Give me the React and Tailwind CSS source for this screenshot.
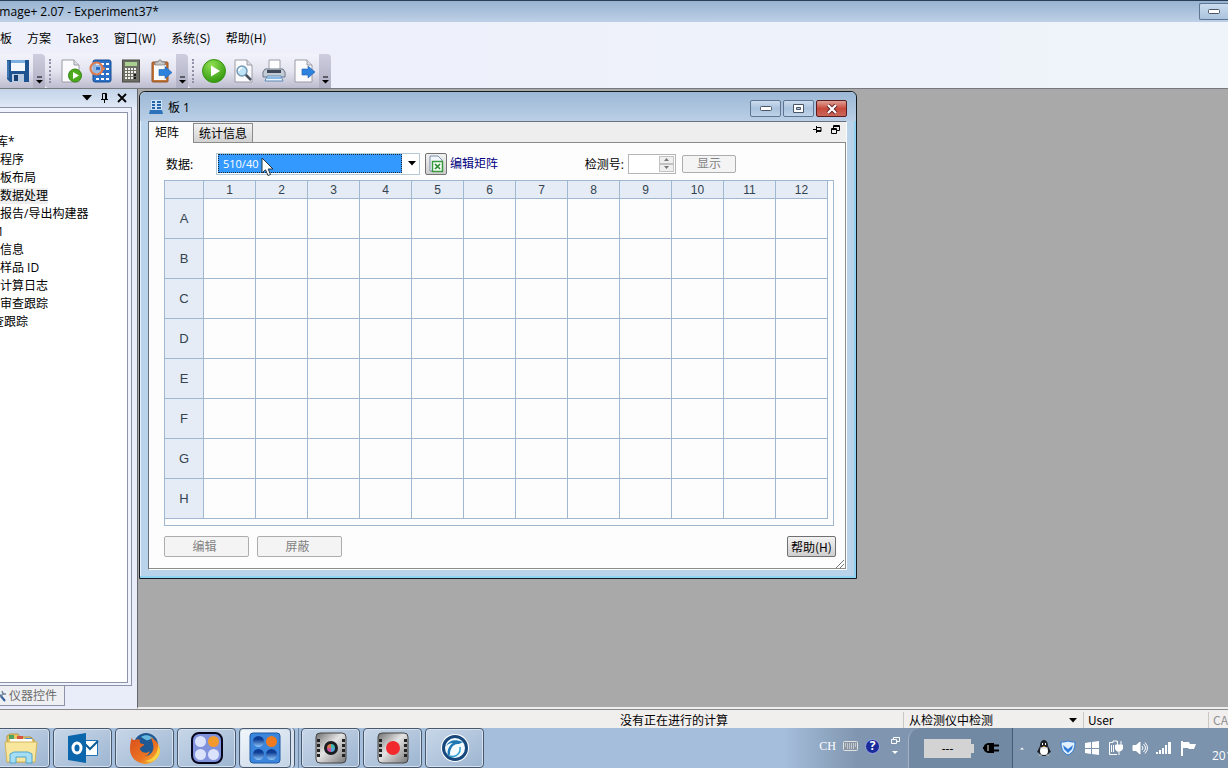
import { useState } from "react";

const COLUMNS = [1, 2, 3, 4, 5, 6, 7, 8, 9, 10, 11, 12];
const ROWS = ["A", "B", "C", "D", "E", "F", "G", "H"];

const MENU = ["方案", "Take3", "窗口(W)", "系统(S)", "帮助(H)"];

const TREE = [
  { label: "库*", indent: "-ml-1" },
  { label: "程序" },
  { label: "板布局" },
  { label: "数据处理", selected: true },
  { label: "报告/导出构建器" },
  { label: "1", indent: "-ml-[3px]" },
  { label: "信息" },
  { label: "样品 ID" },
  { label: "计算日志" },
  { label: "审查跟踪" },
  { label: "查跟踪", indent: "-ml-2" },
];

/* Toolbar icons */

function SaveIcon() {
  return (
    <svg width="24" height="24" viewBox="0 0 24 24">
      <path d="M1 1h22v22H4l-3-3z" fill="#1e5490" />
      <path d="M5 1h14v11H5z" fill="#f4f8fc" />
      <path d="M5 1h14v3H5z" fill="#7db0e0" />
      <path d="M6 15h12v8H6z" fill="#b9cbe0" />
      <path d="M8 16h4v6H8z" fill="#173f70" />
      <path d="M2 2v17" stroke="#5e96cf" />
    </svg>
  );
}

function PageIcon({ children }) {
  return (
    <svg width="24" height="24" viewBox="0 0 24 24">
      <path d="M3 1h12l5 5v17H3z" fill="#fbfbfd" stroke="#9b9ba5" />
      <path d="M15 1v5h5" fill="#dcdce4" stroke="#9b9ba5" />
      {children}
    </svg>
  );
}

function RunPageIcon() {
  return (
    <PageIcon>
      <circle cx="16" cy="16.500" r="6.500" fill="#4bab1c" stroke="#31830d" />
      <path d="M14 13l6 3.500-6 3.500z" fill="#fff" />
    </PageIcon>
  );
}

function PreviewIcon() {
  return (
    <PageIcon>
      <path d="M13 15l6 6" stroke="#46505f" strokeWidth="2.500" />
      <circle cx="10" cy="12" r="5" fill="#bfe3f8" stroke="#7799b5" strokeWidth="1.500" />
      <path d="M7 12a3 3 0 013-3" stroke="#fff" strokeWidth="1.500" fill="none" />
    </PageIcon>
  );
}

function ExportIcon() {
  return (
    <PageIcon>
      <path d="M10 10h6V7l7 6-7 6v-3h-6z" fill="#2f82dc" stroke="#1c5fae" strokeWidth=".6" />
    </PageIcon>
  );
}

function PlateReadIcon() {
  return (
    <svg width="24" height="24" viewBox="0 0 24 24">
      <rect x="4" y="1" width="18" height="22" rx="2" fill="#2a70c6" stroke="#174f94" />
      {[4, 9, 14, 19].map((y) =>
        [7, 12, 17].map((x) => (
          <rect key={`${x}-${y}`} x={x} y={y} width="3" height="2" fill="#fff" />
        ))
      )}
      <circle cx="7.500" cy="9.500" r="6" fill="#cfdcf0aa" stroke="#dd7b4c" strokeWidth="2.200" />
      <rect x="7" y="8" width="4" height="3" fill="#2a70c6" />
      <path d="M12 9.500h4" stroke="#dd7b4c" strokeWidth="2" />
    </svg>
  );
}

function CalculatorIcon() {
  return (
    <svg width="24" height="24" viewBox="0 0 24 24">
      <rect x="3.500" y="1" width="17" height="22" fill="#6c6d64" stroke="#4b4c45" />
      <rect x="6" y="3" width="12" height="4" fill="#a8d18f" />
      {[9, 12, 15, 18].map((y) =>
        [6, 9, 12, 15].map((x) => (
          <rect
            key={`${x}-${y}`}
            x={x}
            y={y}
            width="2"
            height="2"
            fill={x === 15 && y > 14 ? "#1b1b1b" : "#f1f1ec"}
          />
        ))
      )}
    </svg>
  );
}

function ClipboardIcon() {
  return (
    <svg width="24" height="24" viewBox="0 0 24 24">
      <rect x="3" y="3" width="16" height="20" rx="1" fill="#c2763a" stroke="#925022" />
      <path d="M5 6h12v15H5z" fill="#fafafa" />
      <path d="M6 6V3h3l1-2h2l1 2h3v3z" fill="#c7c7c7" stroke="#777" strokeWidth=".7" />
      <path d="M10 10.500h6v-3l7 6-7 6v-3h-6z" fill="#2f82dc" stroke="#1c5fae" strokeWidth=".6" />
    </svg>
  );
}

function PlayIcon() {
  return (
    <svg width="26" height="26" viewBox="0 0 26 26">
      <defs>
        <radialGradient id="play" cx=".4" cy=".25" r=".8">
          <stop offset="0" stopColor="#8fe052" />
          <stop offset="1" stopColor="#2e950b" />
        </radialGradient>
      </defs>
      <circle cx="13" cy="13" r="11.500" fill="url(#play)" stroke="#3b9416" />
      <path d="M10 7.500l9 5.500-9 5.500z" fill="#fff" />
    </svg>
  );
}

function PrinterIcon() {
  return (
    <svg width="24" height="24" viewBox="0 0 24 24">
      <path d="M7 1h11v10H7z" fill="#fdfdfd" stroke="#9aa0aa" />
      <path d="M3 10h18l2 3v5H1v-5z" fill="#c3cbd7" stroke="#6c7687" />
      <path d="M5 11h14v3H5z" fill="#3f4857" />
      <path d="M5 17h14l2 5H3z" fill="#e9f3fc" stroke="#5d88b4" />
      <path d="M5 19h14" stroke="#2f7fca" />
    </svg>
  );
}

function ToolButton({ label, children }) {
  return (
    <button aria-label={label} className="flex h-7 w-[30px] items-center justify-center">
      {children}
    </button>
  );
}

function Overflow() {
  return (
    <button
      aria-label="更多"
      className="flex h-[34px] w-3 items-end justify-center rounded-tr bg-linear-to-b from-[#cdcddf] to-[#b0b0c4] pb-1"
    >
      <svg width="7" height="8" viewBox="0 0 7 8">
        <path d="M1 1h5" stroke="#000" />
        <path d="M0 4h7L3.500 7.500z" fill="#000" />
      </svg>
    </button>
  );
}

function ToolGroup({ children }) {
  return (
    <div className="flex h-[34px] items-center rounded-l bg-linear-to-b from-[#f2f3fb] via-[#e4e4f0] to-[#bcbccf] pl-1">
      <div className="mr-[5px] h-6 w-[2px] border-l-2 border-dotted border-[#8f8fa5]" />
      {children}
      <Overflow />
    </div>
  );
}

/* Side panel */

function SidePanel() {
  return (
    <aside className="flex w-[137px] shrink-0 flex-col bg-[#e9edf9]">
      <div className="flex h-[18px] items-center justify-end gap-2 bg-linear-to-b from-[#c3d3e8] to-[#dfe8f5] pr-[10px]">
        <button aria-label="菜单">
          <svg width="10" height="6" viewBox="0 0 10 6">
            <path d="M0 0h10L5 5.500z" fill="#000" />
          </svg>
        </button>
        <button aria-label="固定">
          <svg width="9" height="10" viewBox="0 0 9 10" fill="none" stroke="#000">
            <path d="M2.500 6V.5h4V6M5.500 1v5M1 6.500h7M4.500 7v3" />
          </svg>
        </button>
        <button aria-label="关闭">
          <svg width="10" height="10" viewBox="0 0 10 10" stroke="#000" strokeWidth="1.800">
            <path d="M1 1l8 8M9 1l-8 8" />
          </svg>
        </button>
      </div>
      <div className="mr-[5px] flex flex-1 border-y border-r border-[#8c93a8] bg-[#f0f3fb] pt-1 pr-[3px] pb-[2px]">
        <ul className="flex-1 overflow-hidden border-y border-r border-[#8c93a8] bg-white pt-5">
          {TREE.map((item) => (
            <li key={item.label} className={`flex h-[18px] items-center ${item.indent || ""}`}>
              <span className={item.selected ? "bg-[#efefef]" : ""}>{item.label}</span>
            </li>
          ))}
        </ul>
      </div>
      <div className="h-[23px]">
        <button className="flex h-5 w-[65px] items-center gap-[3px] border-r border-b border-[#8c93a8] bg-[#eeeff2] text-[#6d6d6d]">
          <svg width="6" height="14" viewBox="0 0 6 14" fill="none">
            <path d="M0 6l5 6" stroke="#2f5d9a" strokeWidth="2" />
            <path d="M0 8l4-4M2 2l1 3 3 0" stroke="#73859d" strokeWidth="1.500" />
          </svg>
          仪器控件
        </button>
      </div>
    </aside>
  );
}

/* Plate window */

function WindowButton({ label, close, children }) {
  return (
    <button
      aria-label={label}
      className={`flex h-[17px] w-[31px] items-center justify-center rounded-xs border ${
        close
          ? "border-[#5b1c20] bg-linear-to-b from-[#dda097] via-[#c8493b] to-[#c8675a]"
          : "border-[#5d7592] bg-linear-to-b from-[#cbdcee] via-[#a9c2dd] to-[#bfd3e8]"
      }`}
    >
      {children}
    </button>
  );
}

function MinimizeGlyph() {
  return (
    <svg width="12" height="6" viewBox="0 0 12 6">
      <rect x=".5" y=".5" width="11" height="4" rx="1" fill="#fff" stroke="#4a5565" />
    </svg>
  );
}

function PlateTable() {
  return (
    <div className="border border-[#9fb8cf] pr-[5px] pb-[6px]">
      <table className="-mt-px -ml-px w-[664px] table-fixed border-collapse font-['Liberation_Sans',sans-serif] text-[#33434f]">
        <thead>
          <tr className="h-[18px] bg-[#e5ecf6]">
            <th className="w-[39px] border border-[#9fb8cf]" />
            {COLUMNS.map((n) => (
              <th key={n} className="w-[52px] border border-[#9fb8cf] p-0 text-xs leading-4 font-normal">
                {n}
              </th>
            ))}
          </tr>
        </thead>
        <tbody>
          {ROWS.map((row) => (
            <tr key={row} className="h-10">
              <th className="border border-[#9fb8cf] bg-[#e5ecf6] p-0 text-[13px] leading-4 font-normal">
                {row}
              </th>
              {COLUMNS.map((n) => (
                <td key={n} className="border border-[#9fb8cf]" />
              ))}
            </tr>
          ))}
        </tbody>
      </table>
    </div>
  );
}

function PlateWindow() {
  const [data, setData] = useState("510/40");
  const [readNo, setReadNo] = useState("");

  return (
    <section className="absolute top-[2px] left-px w-[718px] rounded-t-md border border-[#14191f] bg-[#b9d3ea] shadow-[inset_-2px_-2px_0_#8fd3f2,inset_1px_1px_0_#e8f1fa]">
      <div className="flex h-[29px] items-center rounded-t-md bg-linear-to-b from-[#9cb8d6] to-[#bacfe6] pt-px pr-[9px] pl-[9px]">
        <svg width="14" height="14" viewBox="0 0 14 14">
          <path d="M2 0h11v11H2z" fill="#cfe3f6" />
          <path d="M1 10h12l1 4H0z" fill="#2b72ba" />
          <path d="M3 1h3v2H3zM8 1h4v2H8zM3 4h3v2H3zM8 4h4v2H8zM3 7h3v2H3zM8 7h4v2H8z" fill="#2665a8" />
        </svg>
        <h2 className="mt-[2px] ml-[5px] flex-1">板 1</h2>
        <div className="mt-[3px] flex gap-[2px]">
          <WindowButton label="最小化">
            <MinimizeGlyph />
          </WindowButton>
          <WindowButton label="最大化">
            <svg width="11" height="9" viewBox="0 0 11 9">
              <path d="M.5.500h10v8H.5z" fill="#fff" stroke="#4a5565" />
              <path d="M3.500 3.500h4v2h-4z" fill="#a9c2dd" stroke="#4a5565" />
            </svg>
          </WindowButton>
          <WindowButton label="关闭" close>
            <svg width="12" height="10" viewBox="0 0 12 10">
              <path d="M2 1l8 8M10 1l-8 8" stroke="#5c2225" strokeWidth="4" />
              <path d="M2 1l8 8M10 1l-8 8" stroke="#fff" strokeWidth="2.200" />
            </svg>
          </WindowButton>
        </div>
      </div>

      <div className="mr-[9px] mb-2 ml-2 border border-t-[#68727e] border-r-white border-b-white border-l-[#68727e] bg-[#eee]">
        {/* Tabs */}
        <div className="flex h-[21px] items-end">
          <button className="h-[21px] w-11 bg-[#fdfdfd] pr-2">矩阵</button>
          <div className="flex h-[21px] flex-1 items-end justify-between border-b border-[#8b8b8b]">
            <button className="h-[19px] w-[60px] border border-b-0 border-[#8b8b8b] bg-linear-to-b from-[#f2f2f2] to-[#d2d2d2] pt-px leading-[18px]">
              统计信息
            </button>
            <div className="flex h-[17px] items-start gap-[9px] pr-[6px]">
              <button aria-label="固定">
                <svg width="9" height="9" viewBox="0 0 9 9" fill="none" stroke="#000">
                  <path d="M0 4.500h3M3.500 1v7M4 2.500h4v4H4M4 5.500h4" />
                </svg>
              </button>
              <button aria-label="还原">
                <svg width="9" height="9" viewBox="0 0 9 9" fill="none" stroke="#000">
                  <path d="M2.500 3V.5h6v5H6M2 1.500h7M.5 3.500h5v5h-5zM0 4.500h6" />
                </svg>
              </button>
            </div>
          </div>
        </div>

        <div className="border-r border-b border-[#8b8b8b] bg-[#fdfdfd] pt-[10px] pr-[11px] pl-[15px]">
          {/* Data set and read number */}
          <div className="flex h-[21px] items-center">
            <label htmlFor="data" className="w-[52px] pt-[2px] pl-[2px]">
              数据:
            </label>
            <div className="relative flex h-[22px] w-[204px] items-center border border-[#b4c8d8] bg-white p-px">
              <select
                id="data"
                value={data}
                onChange={(e) => setData(e.target.value)}
                className="h-[19px] w-[184px] appearance-none border border-dotted border-[#1c2c3c] bg-[#3399ff] pl-1 text-[11px] leading-4 text-white"
              >
                <option>510/40</option>
              </select>
              <svg width="8" height="5" viewBox="0 0 8 5" className="ml-[6px]">
                <path d="M0 0h8L4 4.500z" fill="#000" />
              </svg>
              <svg width="13" height="20" viewBox="0 0 13 20" className="absolute top-[3px] left-11">
                <path
                  d="M1 1v15l3.500-3.200L7 18.500l2.500-1L7.200 12H12z"
                  fill="#fff"
                  stroke="#26323e"
                />
              </svg>
            </div>
            <button
              id="edit-matrix"
              className="ml-[5px] flex h-[22px] w-[22px] items-center justify-center rounded-xs border border-[#727272] bg-linear-to-b from-[#f2f2f2] to-[#cfcfcf]"
              aria-label="编辑矩阵"
            >
              <svg width="18" height="18" viewBox="0 0 18 18">
                <path d="M3 1h8l4 4v11H3z" fill="#f3f8ff" stroke="#7b8fa8" />
                <path d="M5.500 6.500h10v10h-10z" fill="#f4fff4" stroke="#3a9a3d" strokeWidth="1.500" />
                <path d="M8 9l5 5M13 9l-5 5" stroke="#2f8c33" strokeWidth="1.700" />
              </svg>
            </button>
            <label htmlFor="edit-matrix" className="ml-[3px] text-[#000080]">
              编辑矩阵
            </label>
            <div className="flex flex-1 items-center justify-end pr-[98px]">
              <label htmlFor="read-no" className="pt-[2px]">
                检测号:
              </label>
              <div className="mr-[6px] ml-1 flex h-5 w-12 border border-[#b5b5b5] bg-white p-px">
                <input
                  id="read-no"
                  value={readNo}
                  onChange={(e) => setReadNo(e.target.value)}
                  className="w-0 flex-1 outline-none"
                />
                <div className="flex w-[15px] flex-col">
                  <button
                    aria-label="增加"
                    className="flex flex-1 items-center justify-center border border-[#c2c2c2] bg-[#efefef]"
                  >
                    <svg width="5" height="3" viewBox="0 0 5 3">
                      <path d="M0 3h5L2.500 0z" fill="#777" />
                    </svg>
                  </button>
                  <button
                    aria-label="减少"
                    className="flex flex-1 items-center justify-center border border-[#c2c2c2] bg-[#efefef]"
                  >
                    <svg width="5" height="3" viewBox="0 0 5 3">
                      <path d="M0 0h5L2.500 3z" fill="#777" />
                    </svg>
                  </button>
                </div>
              </div>
              <button
                disabled
                className="h-[18px] w-[54px] rounded-xs border border-[#adadad] bg-[#f4f4f4] leading-4 text-[#838383]"
              >
                显示
              </button>
            </div>
          </div>

          <div className="mt-[6px]">
            <PlateTable />
          </div>

          {/* Actions */}
          <div className="mt-[10px] flex h-8 items-start">
            <button
              disabled
              className="mr-2 h-[21px] w-[85px] rounded-xs border border-[#adadad] bg-[#f4f4f4] pr-1 text-[#838383]"
            >
              编辑
            </button>
            <button
              disabled
              className="h-[21px] w-[85px] rounded-xs border border-[#adadad] bg-[#f4f4f4] pr-1 text-[#838383]"
            >
              屏蔽
            </button>
            <button className="ml-auto h-[21px] w-[49px] rounded-xs border border-[#707070] bg-linear-to-b from-[#f2f2f2] to-[#cfcfcf] font-['Noto_Sans_CJK_SC',sans-serif] leading-4 whitespace-nowrap">
              帮助(H)
            </button>
            <svg width="9" height="9" viewBox="0 0 9 9" className="-mr-[11px] self-end" stroke="#777">
              <path d="M0 9l8-8M4 9l4-4" />
            </svg>
          </div>
        </div>
      </div>
    </section>
  );
}

/* Status bar */

function StatusBar() {
  return (
    <footer className="flex h-[19px] items-center border-t border-[#8b8b8b] bg-[#f1eeee] pt-[2px] font-['Noto_Sans_CJK_SC',sans-serif] leading-4">
      <div className="flex-1 pl-[620px]">没有正在进行的计算</div>
      <div className="flex h-4 w-[180px] items-center border-l border-[#c9c6c6] pr-[6px] pl-[5px]">
        <select aria-label="检测仪" className="flex-1 appearance-none outline-none">
          <option>从检测仪中检测</option>
        </select>
        <svg width="8" height="5" viewBox="0 0 8 5">
          <path d="M0 0h8L4 4.500z" fill="#000" />
        </svg>
      </div>
      <div className="h-4 w-[125px] border-l border-[#c9c6c6] pl-1">User</div>
      <div className="h-4 w-5 overflow-hidden border-l border-[#c9c6c6] pl-1 text-[#909090]">CAP</div>
    </footer>
  );
}

/* Taskbar icons */

function FolderIcon() {
  return (
    <svg width="34" height="32" viewBox="0 0 34 32">
      <path d="M3 4l3-2h8l2 3h11l3 3v22H3z" fill="#e6c767" stroke="#b9973f" />
      <path d="M5 3h5v4H5z" fill="#4fa35d" />
      <path d="M13 4h6v4h-6z" fill="#d9543f" />
      <path d="M21 6h7v4h-7z" fill="#4f8fd0" />
      <path d="M6 7h22v3H6z" fill="#fff" />
      <path d="M1 10h32l-2 20H3z" fill="#f7e69c" stroke="#d3b65c" />
      <path d="M6 31v-9l4-2h14l4 2v9h-6v-6H12v6z" fill="#a5def4" stroke="#4fa5cd" />
    </svg>
  );
}

function OutlookIcon() {
  return (
    <svg width="32" height="32" viewBox="0 0 32 32">
      <path d="M17 8.500h13.500v15H17z" fill="#fff" stroke="#1d72b8" />
      <path d="M18 12l5 5 8-8" fill="none" stroke="#0d5a94" strokeWidth="2" />
      <path d="M1 4l18-3v30L1 28z" fill="#0b66ab" />
      <ellipse cx="10" cy="16" rx="4" ry="5" fill="none" stroke="#fff" strokeWidth="3" />
    </svg>
  );
}

function FirefoxIcon() {
  return (
    <svg width="32" height="32" viewBox="0 0 32 32">
      <defs>
        <linearGradient id="fox" x1="0" y1="0" x2="1" y2="1">
          <stop offset="0" stopColor="#d94e1c" />
          <stop offset=".6" stopColor="#ec7422" />
          <stop offset="1" stopColor="#f9cf3c" />
        </linearGradient>
      </defs>
      <circle cx="17" cy="13" r="12" fill="#1f5892" />
      <path d="M12 5c4-3 10-2 13 2-4-1-5 2-8 1z" fill="#65b9de" />
      <path
        d="M3 5c0 3 1 3 3 3 2-1 4-1 5 0-1 3 1 4 4 4 0 3-4 2-4 5 1 4 7 5 10 2-1 3-3 5-7 5 7 1 12-5 10-12-1-3-1-5-3-7 7 3 10 9 10 14-1 8-8 13-15 13C7 31 1 25 1 17 1 12 2 8 3 5z"
        fill="url(#fox)"
      />
      <path d="M29 12c1 9-5 16-13 17 8 3 15-3 15-11z" fill="#f9d345" />
    </svg>
  );
}

function WellsIcon({ filled }) {
  return (
    <svg width="32" height="32" viewBox="0 0 32 32">
      <defs>
        <linearGradient id="well" x1="0" y1="0" x2="0" y2="1">
          <stop offset=".3" stopColor="#0d3c94" />
          <stop offset="1" stopColor="#8fc6f8" />
        </linearGradient>
      </defs>
      <rect
        x="1"
        y="1"
        width="30"
        height="30"
        rx={filled ? 3 : 7}
        fill={filled ? "#3b86dc" : "#8092dc"}
        stroke={filled ? "#1c59a5" : "#05051c"}
        strokeWidth={filled ? 1 : 2}
      />
      <circle cx="9.500" cy="9.500" r="5.500" fill={filled ? "url(#well)" : "#dbe2fb"} />
      <circle cx="22.500" cy="9.500" r="5.500" fill={filled ? "#ef7a1f" : "#f39a2d"} />
      <circle cx="9.500" cy="22.500" r="5.500" fill={filled ? "url(#well)" : "#dbe2fb"} />
      <circle cx="22.500" cy="22.500" r="5.500" fill={filled ? "url(#well)" : "#dbe2fb"} />
    </svg>
  );
}

function FilmIcon({ record }) {
  return (
    <svg width="32" height="32" viewBox="0 0 32 32">
      <defs>
        <linearGradient id="film" x1="0" y1="0" x2="1" y2="1">
          <stop offset="0" stopColor="#6f6f6f" />
          <stop offset=".45" stopColor="#e4e4e4" />
          <stop offset="1" stopColor="#777" />
        </linearGradient>
      </defs>
      <rect x="1" y="1" width="30" height="30" rx="4" fill="url(#film)" stroke="#454545" />
      <path d="M3.500 7v20M28.500 7v20" stroke="#222" strokeWidth="3" strokeDasharray="3 2" />
      {record ? (
        <circle cx="16" cy="16" r="7" fill="#f2292d" />
      ) : (
        <>
          <circle cx="16" cy="16" r="7" fill="#1a1c20" />
          <path d="M16 16V12a4 4 0 014 4z" fill="#40b9b2" />
          <path d="M16 16h4a4 4 0 01-4 4z" fill="#53a7d7" />
          <path d="M16 16v4a4 4 0 01-4-4z" fill="#d0519d" />
          <path d="M16 16h-4a4 4 0 014-4z" fill="#dc784b" />
        </>
      )}
    </svg>
  );
}

function BirdIcon() {
  return (
    <svg width="30" height="30" viewBox="0 0 30 30">
      <circle cx="15" cy="15" r="14" fill="#fff" />
      <circle cx="15" cy="15" r="11.500" fill="#f3fbff" stroke="#17487c" strokeWidth="3" />
      <path d="M6 13C9 7 15 6 23 9l-4 2c-6-1-9 5-9 10l-1 3c-3-4-1-11 4-14-3 0-5 1-7 3z" fill="#1f78b4" />
      <path d="M10 23c6 2 11-3 10-9" fill="none" stroke="#2f9fd0" strokeWidth="1.500" />
    </svg>
  );
}

function TaskButton({ label, first, active, children }) {
  return (
    <button
      aria-label={label}
      className={`mr-[3px] flex h-10 items-center justify-center rounded-sm border border-[#48586d] shadow-[inset_0_0_0_1px_#d5e1ee] ${
        first ? "-ml-[9px] w-[59px]" : active ? "w-[52px]" : "w-[59px]"
      } ${
        active
          ? "bg-linear-to-br from-[#f3f7fb] to-[#c2d3e6]"
          : "bg-linear-to-br from-[#c8d7e8] to-[#9db5d1]"
      }`}
    >
      {children}
    </button>
  );
}

function Tray() {
  return (
    <div className="flex flex-1 items-center justify-end overflow-hidden bg-linear-to-r from-[#a5bedb] from-40% to-[#8096b0] to-50%">
      {/* Language bar */}
      <div className="mr-2 flex items-center gap-[7px] pb-1 text-white">
        <span className="font-['Liberation_Serif',serif] text-xs">CH</span>
        <svg width="15" height="10" viewBox="0 0 15 10">
          <rect x=".5" y=".5" width="14" height="9" rx="1" fill="#8994a2" stroke="#e2e2e2" />
          <path d="M2 3h11M2 5h11M4 7h7" stroke="#fff" strokeDasharray="1 1" />
        </svg>
        <span className="mr-1 flex h-[15px] w-[15px] items-center justify-center rounded-full border border-[#9aa9e0] bg-[#1b2b9b] text-xs leading-3 font-bold">
          ?
        </span>
        <svg width="9" height="18" viewBox="0 0 9 18" fill="none" stroke="#fff">
          <path d="M2.500 2V.5h6v4H6M.5 2.500h5v4h-5z" />
          <path d="M1 14h6l-3 3z" fill="#fff" stroke="none" />
        </svg>
      </div>
      {/* Battery */}
      <div className="flex h-full w-[104px] items-center gap-[9px] rounded-tl-xl border-l border-[#a3b3c5] bg-[#7189a3] pl-[15px]">
        <div className="flex items-center">
          <div className="h-[19px] w-[47px] bg-[#d3d3d3] text-center leading-5">---</div>
          <div className="h-[9px] w-[3px] bg-[#d3d3d3]" />
        </div>
        <svg width="16" height="12" viewBox="0 0 16 12">
          <path d="M5 1h6v10H5C-1 10-1 2 5 1z" fill="#000" />
          <path d="M11 3.500h5M11 8.500h5M0 6h3" stroke="#000" strokeWidth="2" />
          <path d="M5 3v6" stroke="#dedede" />
        </svg>
      </div>
      {/* Notification area */}
      <div className="flex h-full w-[216px] items-center border-l border-[#455a73] bg-[#7c93ad] pl-[7px]">
        <svg width="8" height="5" viewBox="0 0 8 5" className="mr-3">
          <path d="M0 4.500h8L4 .5z" fill="#fff" />
        </svg>
        <div className="flex items-center gap-2">
          <svg width="16" height="16" viewBox="0 0 16 16">
            <path d="M4 6c0-8 8-8 8 0l3 6-2 1c0 4-10 4-10 0l-2-1z" fill="#1e2026" />
            <ellipse cx="8" cy="11" rx="4" ry="4" fill="#fff" />
            <path d="M6 3h1v2H6zM9 3h1v2H9z" fill="#fff" />
            <path d="M6 6h4l-2 1z" fill="#e6a53b" />
            <path d="M3 15h3M10 15h3M4 8h8" stroke="#d6d6d6" />
          </svg>
          <svg width="16" height="16" viewBox="0 0 16 16">
            <path d="M8 1c3 1 5 1 7 1 0 7-2 11-7 13C3 13 1 9 1 2c2 0 4 0 7-1z" fill="#e2f0ff" stroke="#2e79cf" />
            <path d="M3 5l5 4 5-4-1 4-4 4-4-4z" fill="#337fd8" />
          </svg>
          <svg width="16" height="16" viewBox="0 0 16 16" fill="#fff">
            <path d="M1 3l6-1v6H1zM8 2l7-1v7H8zM1 9h6v5l-6-1zM8 9h7v6l-7-1z" />
          </svg>
          <svg width="16" height="16" viewBox="0 0 16 16" fill="none" stroke="#fff">
            <path d="M9 2.500V1H5v1.500H1.500v12H9M3.500 5v7M5.500 5v7M9.500 1v4M13 1v4" />
            <path d="M7.500 5h7v4l-2 2H9L7.500 9zM11 11v4" fill="#fff" />
          </svg>
          <svg width="16" height="16" viewBox="0 0 16 16" fill="none" stroke="#fff">
            <path d="M1 5.500h3L8 2v12l-4-3.500H1z" fill="#fff" />
            <path d="M10 6q2 2 0 4M11.500 4q4 4 0 8M13 2.500q5 5.500 0 11" />
          </svg>
          <svg width="16" height="16" viewBox="0 0 16 16" fill="#fff">
            <path d="M0 12h2v2H0zM3 10h2v4H3zM6 8h2v6H6zM9 5h2v9H9zM12 2h3v12h-3z" />
          </svg>
          <svg width="17" height="16" viewBox="0 0 17 16">
            <path d="M2 1v15" stroke="#fff" strokeWidth="2" />
            <path d="M3 2h6l1 2h6l-2 5H9L8 8H3z" fill="#fff" />
          </svg>
        </div>
        <time className="ml-[15px] h-5 w-4 shrink-0 self-end overflow-hidden text-white">2014</time>
      </div>
    </div>
  );
}

function Taskbar() {
  return (
    <nav className="flex h-10 overflow-hidden bg-[#a5bedb]">
      <TaskButton label="资源管理器" first>
        <FolderIcon />
      </TaskButton>
      <TaskButton label="Outlook">
        <OutlookIcon />
      </TaskButton>
      <TaskButton label="Firefox">
        <FirefoxIcon />
      </TaskButton>
      <TaskButton label="Gen5">
        <WellsIcon />
      </TaskButton>
      <TaskButton label="Gen5 Image+" active>
        <WellsIcon filled />
      </TaskButton>
      <div className="-ml-[3px] flex w-[10px] gap-[3px]">
        <div className="h-10 w-1 rounded-r-sm border-r border-[#48586d] bg-[#d7e2ee]" />
        <div className="h-10 w-px bg-[#71849b]" />
      </div>
      <TaskButton label="截图">
        <FilmIcon />
      </TaskButton>
      <TaskButton label="录像">
        <FilmIcon record />
      </TaskButton>
      <TaskButton label="翻译">
        <BirdIcon />
      </TaskButton>
      <Tray />
    </nav>
  );
}

export default function App() {
  return (
    <div className="flex h-screen flex-col overflow-hidden bg-[#eef2fb] font-['Open_Sans','Noto_Sans_CJK_SC',sans-serif] text-xs text-black">
      {/* Title bar */}
      <header className="flex h-[22px] items-center justify-between border-t border-[#2b3f56] bg-linear-to-b from-[#98b4d2] to-[#bdd0e6]">
        <h1 className="-ml-1 leading-5">Image+ 2.07 - Experiment37*</h1>
        <button
          aria-label="最小化"
          className="flex h-[17px] w-[29px] items-center justify-center rounded-l-xs border border-r-0 border-[#5d7592] bg-linear-to-b from-[#cbdcee] to-[#aac3de]"
        >
          <MinimizeGlyph />
        </button>
      </header>

      {/* Menu */}
      <div className="flex h-8 items-center gap-[15px] bg-linear-to-r from-[#edeffb] to-[#eff4fa] font-['Noto_Sans_CJK_SC',sans-serif]">
        <button>板</button>
        {MENU.map((item) => (
          <button key={item}>{item}</button>
        ))}
      </div>

      {/* Toolbar */}
      <div className="flex h-[35px] border-b border-[#76797e] bg-linear-to-r from-[#edeffb] to-[#eff4fa]">
        <div className="flex h-[34px] w-[45px] items-center justify-end bg-linear-to-b from-[#f2f3fb] via-[#e4e4f0] to-[#bcbccf]">
          <ToolButton label="保存">
            <SaveIcon />
          </ToolButton>
          <Overflow />
        </div>
        <ToolGroup>
          <ToolButton label="新建任务">
            <RunPageIcon />
          </ToolButton>
          <ToolButton label="读板">
            <PlateReadIcon />
          </ToolButton>
          <ToolButton label="计算">
            <CalculatorIcon />
          </ToolButton>
          <ToolButton label="粘贴">
            <ClipboardIcon />
          </ToolButton>
        </ToolGroup>
        <ToolGroup>
          <ToolButton label="运行">
            <PlayIcon />
          </ToolButton>
          <ToolButton label="预览">
            <PreviewIcon />
          </ToolButton>
          <ToolButton label="打印">
            <PrinterIcon />
          </ToolButton>
          <ToolButton label="导出">
            <ExportIcon />
          </ToolButton>
        </ToolGroup>
      </div>

      <div className="flex min-h-0 flex-1">
        <SidePanel />
        <main className="relative flex-1 border-b-2 border-l border-b-[#eee] border-l-[#63676d] bg-[#a9a9a9]">
          <PlateWindow />
        </main>
      </div>

      <StatusBar />
      <Taskbar />
    </div>
  );
}
